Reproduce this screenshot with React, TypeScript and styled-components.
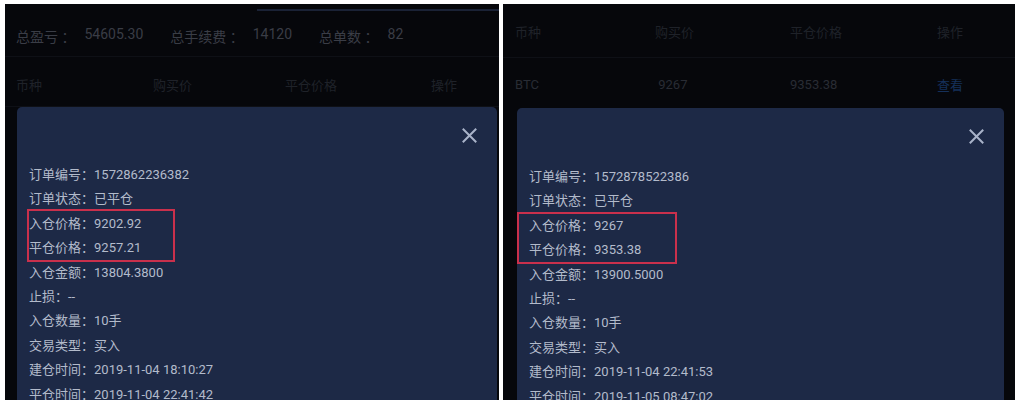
import React from "react";
import styled, { createGlobalStyle } from "styled-components";

const Global = createGlobalStyle`
  html, body { margin: 0; padding: 0; background: #ffffff; }
  body { font-family: Roboto, "Noto Sans CJK SC", sans-serif; }
`;

const Page = styled.div`
  display: flex;
  gap: 4px;
  padding: 4px 0 0 5px;
  width: 1021px;
  height: 400px;
  box-sizing: border-box;
  overflow: hidden;
`;

const Screen = styled.div<{ $w: number }>`
  width: ${(p) => p.$w}px;
  height: 396px;
  flex: none;
  background: #06070b;
  overflow: hidden;
  display: flex;
  flex-direction: column;
  & > * { flex-shrink: 0; }
`;

const TabTrack = styled.div`
  height: 8px;
  display: flex;
  align-items: flex-end;
  padding-left: 252px;
`;

const TabLine = styled.div`
  flex: 1;
  height: 2px;
  margin-bottom: 1px;
  background: #1a2236;
`;

const Stats = styled.div`
  height: 45px;
  box-sizing: border-box;
  padding: 4px 0 0 11px;
  display: flex;
  align-items: center;
  gap: 27px;
  font-size: 14px;
  color: #3a3d46;
  border-bottom: 1px solid #0e1016;
`;

const Stat = styled.span`
  display: flex;
  gap: 9px;
`;

const Row = styled.div<{ $h: number; $cols: string; $pad: number; $left: number; $line?: boolean }>`
  height: ${(p) => p.$h}px;
  box-sizing: border-box;
  padding: ${(p) => p.$pad}px 0 0 ${(p) => p.$left}px;
  display: grid;
  grid-template-columns: ${(p) => p.$cols};
  align-items: center;
  font-size: 13px;
  border-bottom: ${(p) => (p.$line ? "1px solid #0e1016" : "none")};
`;

const Cell = styled.span<{ $tone?: "head" | "body" | "link" }>`
  color: ${(p) => (p.$tone === "link" ? "#15305a" : p.$tone === "body" ? "#292c34" : "#1f2229")};
  white-space: nowrap;
`;

const Modal = styled.div<{ $ml: number; $w: number }>`
  margin-left: ${(p) => p.$ml}px;
  width: ${(p) => p.$w}px;
  flex: 1 0 auto;
  background: #1d2946;
  border-radius: 5px 5px 0 0;
  padding-left: 12px;
  box-sizing: border-box;
`;

const ModalHead = styled.div<{ $h: number }>`
  height: ${(p) => p.$h}px;
  display: flex;
  justify-content: flex-end;
  align-items: center;
  padding-right: 20px;
`;

const Close = styled.svg`
  width: 15px;
  height: 15px;
  display: block;
`;

const Line = styled.div`
  height: 24.4px;
  line-height: 24.4px;
  font-size: 13px;
  color: #b3bbcb;
  white-space: nowrap;
`;

const Highlight = styled.div<{ $l: number; $w: number; $t: number; $b: number }>`
  position: relative;
  &::after {
    content: "";
    position: absolute;
    left: ${(p) => p.$l}px;
    width: ${(p) => p.$w}px;
    top: ${(p) => p.$t}px;
    bottom: ${(p) => p.$b}px;
    border: 2px solid #c9304c;
    box-sizing: border-box;
    pointer-events: none;
  }
`;

type Detail = { id: string; entry: string; exit: string; amount: string; open: string; close: string };

const CloseIcon = () => (
  <Close viewBox="0 0 15 15">
    <path d="M1.5 1.5 L13.5 13.5 M13.5 1.5 L1.5 13.5" stroke="#a9b3c9" strokeWidth="2" strokeLinecap="square" />
  </Close>
);

const Details = ({ d, hl }: { d: Detail; hl: { l: number; w: number; t: number; b: number } }) => (
  <>
    <Line>订单编号：{d.id}</Line>
    <Line>订单状态：已平仓</Line>
    <Highlight $l={hl.l} $w={hl.w} $t={hl.t} $b={hl.b}>
      <Line>入仓价格：{d.entry}</Line>
      <Line>平仓价格：{d.exit}</Line>
    </Highlight>
    <Line>入仓金额：{d.amount}</Line>
    <Line>止损：--</Line>
    <Line>入仓数量：10手</Line>
    <Line>交易类型：买入</Line>
    <Line>建仓时间：{d.open}</Line>
    <Line>平仓时间：{d.close}</Line>
  </>
);

const leftCols = "137px 132px 146px 1fr";
const rightCols = "140px 135px 147px 1fr";

export default function App() {
  return (
    <>
      <Global />
      <Page>
        <Screen $w={494}>
          <TabTrack>
            <TabLine />
          </TabTrack>
          <Stats>
            <Stat>
              <span>总盈亏 ：</span>
              <span>54605.30</span>
            </Stat>
            <Stat>
              <span>总手续费 ：</span>
              <span>14120</span>
            </Stat>
            <Stat>
              <span>总单数 ：</span>
              <span>82</span>
            </Stat>
          </Stats>
          <Row $h={50} $cols={leftCols} $pad={6} $left={11} $line>
            <Cell>币种</Cell>
            <Cell>购买价</Cell>
            <Cell>平仓价格</Cell>
            <Cell>操作</Cell>
          </Row>
          <Modal $ml={12} $w={480}>
            <ModalHead $h={56}>
              <CloseIcon />
            </ModalHead>
            <Details
              d={{
                id: "1572862236382",
                entry: "9202.92",
                exit: "9257.21",
                amount: "13804.3800",
                open: "2019-11-04 18:10:27",
                close: "2019-11-04 22:41:42",
              }}
              hl={{ l: -2, w: 148, t: -3, b: -1 }}
            />
          </Modal>
        </Screen>
        <Screen $w={512}>
          <Row $h={54} $cols={rightCols} $pad={2} $left={12} $line>
            <Cell>币种</Cell>
            <Cell>购买价</Cell>
            <Cell>平仓价格</Cell>
            <Cell>操作</Cell>
          </Row>
          <Row $h={50} $cols={rightCols} $pad={3} $left={12}>
            <Cell $tone="body">BTC</Cell>
            <Cell $tone="body">&nbsp;9267</Cell>
            <Cell $tone="body">9353.38</Cell>
            <Cell $tone="link">查看</Cell>
          </Row>
          <Modal $ml={14} $w={487}>
            <ModalHead $h={57}>
              <CloseIcon />
            </ModalHead>
            <Details
              d={{
                id: "1572878522386",
                entry: "9267",
                exit: "9353.38",
                amount: "13900.5000",
                open: "2019-11-04 22:41:53",
                close: "2019-11-05 08:47:02",
              }}
              hl={{ l: -12, w: 160, t: -2, b: -1 }}
            />
          </Modal>
        </Screen>
      </Page>
    </>
  );
}
